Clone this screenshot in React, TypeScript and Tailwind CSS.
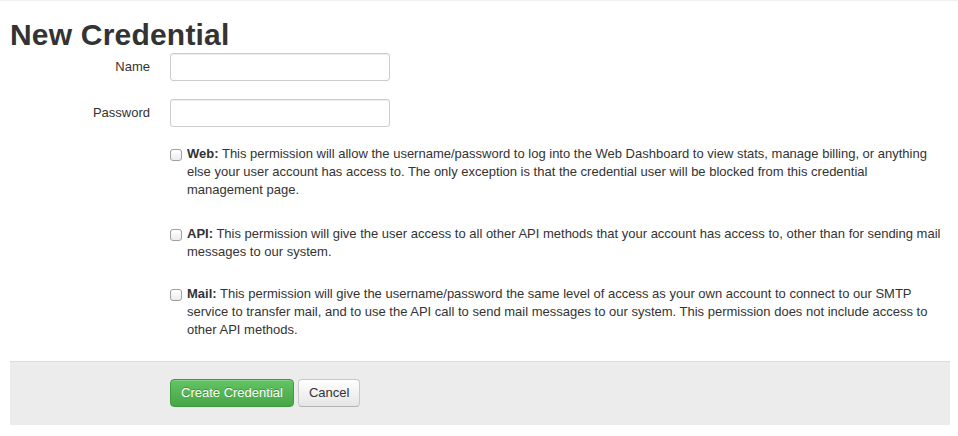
import React from 'react';

interface Permission {
  key: string;
  title: string;
  text: string;
}

const permissions: Permission[] = [
  {
    key: 'web',
    title: 'Web:',
    text: 'This permission will allow the username/password to log into the Web Dashboard to view stats, manage billing, or anything else your user account has access to. The only exception is that the credential user will be blocked from this credential management page.',
  },
  {
    key: 'api',
    title: 'API:',
    text: 'This permission will give the user access to all other API methods that your account has access to, other than for sending mail messages to our system.',
  },
  {
    key: 'mail',
    title: 'Mail:',
    text: 'This permission will give the username/password the same level of access as your own account to connect to our SMTP service to transfer mail, and to use the API call to send mail messages to our system. This permission does not include access to other API methods.',
  },
];

const TextField: React.FC<{ label: string; type?: string }> = ({ label, type = 'text' }) => (
  <div className="flex mb-[18px]">
    <label className="w-[140px] pt-[5px] text-right">{label}</label>
    <input
      type={type}
      className="ml-[20px] w-[220px] h-[28px] px-[6px] border border-[#ccc] rounded-[3px] bg-white shadow-[inset_0_1px_1px_rgba(0,0,0,0.075)] outline-none"
    />
  </div>
);

export default function App() {
  return (
    <div className="min-h-screen bg-white border-t border-[#f0f0f0] font-['Liberation_Sans',Arial,sans-serif] text-[13px] leading-[18px] text-[#333]">
      <div className="pl-[10px] pr-[8px]">
        <h1 className="mt-[16px] text-[30px] leading-[36px] font-bold tracking-[0.2px] text-[#333]">New Credential</h1>

        <form>
          <TextField label="Name" />
          <TextField label="Password" type="password" />

          {/* permission checkboxes */}
          <div className="ml-[160px] mr-[8px] flex flex-col">
            {permissions.map((p, i) => (
              <label
                key={p.key}
                className={`flex gap-[5px] ${i === 0 ? 'mb-[26px]' : i === 1 ? 'mb-[24px]' : ''}`}
              >
                <span className="shrink-0 mt-[4px] w-[12px] h-[12px] border border-[#a0a0a0] rounded-[3px] bg-gradient-to-b from-white to-[#ececec]" />
                <span>
                  <b className="font-bold">{p.title}</b> {p.text}
                </span>
              </label>
            ))}
          </div>

          <div className="mt-[22px] bg-[#ececec] border-t border-[#dcdcdc] pt-[17px] pb-[18px] pl-[160px] flex gap-[4px]">
            <button
              type="button"
              className="h-[28px] px-[10px] rounded-[4px] border border-[#3f9a3f] bg-gradient-to-b from-[#62c462] to-[#48a648] text-white shadow-[inset_0_1px_0_rgba(255,255,255,0.2)] [text-shadow:0_-1px_0_rgba(0,0,0,0.25)]"
            >
              Create Credential
            </button>
            <button
              type="button"
              className="h-[28px] px-[10px] rounded-[4px] border border-[#c8c8c8] border-b-[#b3b3b3] bg-gradient-to-b from-white to-[#e6e6e6] text-[#333] shadow-[inset_0_1px_0_rgba(255,255,255,0.2)]"
            >
              Cancel
            </button>
          </div>
        </form>
      </div>
    </div>
  );
}
